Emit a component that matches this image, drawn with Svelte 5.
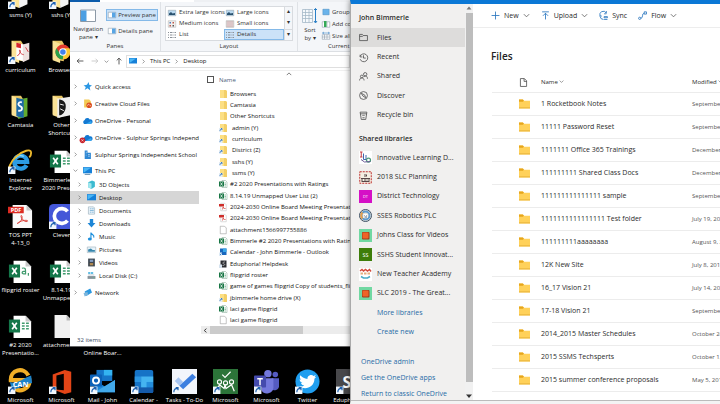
<script>
	// Desktop with two overlapping windows: File Explorer and OneDrive.

	const shortcuts = [
		{ col: 1, row: 1, icon: 'folder', label: 'ssms (Y)', link: true },
		{ col: 2, row: 1, icon: 'folder', label: 'sshs (Y)', link: true },
		{ col: 1, row: 2, icon: 'folderPdf', label: 'curriculum', link: true },
		{ col: 2, row: 2, icon: 'folderChrome', label: 'Browsers' },
		{ col: 1, row: 3, icon: 'folderCam', label: 'Camtasia' },
		{ col: 2, row: 3, icon: 'folderOther', label: 'Other\nShortcuts' },
		{ col: 1, row: 4, icon: 'ie', label: 'Internet\nExplorer', link: true },
		{ col: 2, row: 4, icon: 'excel', label: 'Bimmerle #2\n2020 Presen...' },
		{ col: 1, row: 5, icon: 'pdf', label: 'TOS PPT\n4-13_0' },
		{ col: 2, row: 5, icon: 'clever', label: 'Clever', link: true },
		{ col: 1, row: 6, icon: 'csv', label: 'flipgrid roster' },
		{ col: 2, row: 6, icon: 'excel', label: '8.14.19\nUnmapped ...' },
		{ col: 1, row: 7, icon: 'excel', label: '#2 2020\nPresentatio...' },
		{ col: 2, row: 7, icon: 'page', label: 'attachment...' },
		{ col: 3, row: 7, icon: 'pdf', label: '2024-2030\nOnline Boar...' },
		{ col: 1, row: 8, icon: 'can', label: 'Microsoft', link: true },
		{ col: 2, row: 8, icon: 'office', label: 'Microsoft', link: true },
		{ col: 3, row: 8, icon: 'mail', label: 'Mail - John', link: true },
		{ col: 4, row: 8, icon: 'calendar', label: 'Calendar -', link: true },
		{ col: 5, row: 8, icon: 'todo', label: 'Tasks - To-Do', link: true },
		{ col: 6, row: 8, icon: 'classroom', label: 'Microsoft', link: true },
		{ col: 7, row: 8, icon: 'teams', label: 'Microsoft', link: true },
		{ col: 8, row: 8, icon: 'twitter', label: 'Twitter', link: true },
		{ col: 9, row: 8, icon: 'edu', label: 'Eduphoria!', link: true }
	];

	const roots = [
		{ icon: 'star', label: 'Quick access' },
		{ icon: 'creative', label: 'Creative Cloud Files' },
		{ icon: 'cloud', label: 'OneDrive - Personal' },
		{ icon: 'cloudError', label: 'OneDrive - Sulphur Springs Independent' },
		{ icon: 'building', label: 'Sulphur Springs Independent School' },
		{ icon: 'monitor', label: 'This PC', open: true }
	];

	const places = [
		{ icon: 'cube', label: '3D Objects' },
		{ icon: 'screen', label: 'Desktop', active: true },
		{ icon: 'doc', label: 'Documents' },
		{ icon: 'down', label: 'Downloads' },
		{ icon: 'music', label: 'Music' },
		{ icon: 'picture', label: 'Pictures' },
		{ icon: 'video', label: 'Videos' },
		{ icon: 'disk', label: 'Local Disk (C:)' }
	];

	const files = [
		{ icon: 'dir', label: 'Browsers' },
		{ icon: 'dir', label: 'Camtasia' },
		{ icon: 'dir', label: 'Other Shortcuts' },
		{ icon: 'dirLink', label: 'admin (Y)', pad: true },
		{ icon: 'dirLink', label: 'curriculum', pad: true },
		{ icon: 'dirLink', label: 'District (Z)', pad: true },
		{ icon: 'dirLink', label: 'sshs (Y)', pad: true },
		{ icon: 'dirLink', label: 'ssms (Y)', pad: true },
		{ icon: 'xls', label: '#2 2020 Presentations with Ratings' },
		{ icon: 'xls', label: '8.14.19 Unmapped User List (2)' },
		{ icon: 'pdfSmall', label: '2024-2030 Online Board Meeting Presentation' },
		{ icon: 'pdfSmall', label: '2024-2030 Online Board Meeting Presentation' },
		{ icon: 'blank', label: 'attachment1566997755886' },
		{ icon: 'xls', label: 'Bimmerle #2 2020 Presentations with Ratings' },
		{ icon: 'outlook', label: 'Calendar - John Bimmerle - Outlook' },
		{ icon: 'eduSmall', label: 'Eduphoria! Helpdesk' },
		{ icon: 'xls', label: 'flipgrid roster' },
		{ icon: 'xls', label: 'game of games flipgrid Copy of students_flip' },
		{ icon: 'dirLink', label: 'jbimmerle home drive (X)' },
		{ icon: 'xls', label: 'laci game flipgrid' },
		{ icon: 'blank', label: 'laci game flipgrid' }
	];

	const menu = [
		{ icon: 'navFiles', label: 'Files', active: true },
		{ icon: 'navRecent', label: 'Recent' },
		{ icon: 'navShared', label: 'Shared' },
		{ icon: 'navDiscover', label: 'Discover' },
		{ icon: 'navBin', label: 'Recycle bin' }
	];

	const libraries = [
		{ icon: 'libIld', label: 'Innovative Learning D...' },
		{ icon: 'libSlc', label: '2018 SLC Planning' },
		{ icon: 'libDt', label: 'District Technology' },
		{ icon: 'libRobot', label: 'SSES Robotics PLC' },
		{ icon: 'libOrange', label: 'Johns Class for Videos' },
		{ icon: 'libSs', label: 'SSHS Student Innovat...' },
		{ icon: 'libTeach', label: 'New Teacher Academy' },
		{ icon: 'libOrange', label: 'SLC 2019 - The Great...' }
	];

	const folders = [
		['1 Rocketbook Notes', 'September 4, 2019'],
		['11111 Password Reset', 'September 9, 2019'],
		['1111111 Office 365 Trainings', 'December 4, 2018'],
		['111111111 Shared Class Docs', 'December 11, 2018'],
		['111111111111111 sample', 'September 12, 2019'],
		['1111111111111111 Test folder', 'July 19, 2018'],
		['111111111aaaaaaaa', 'August 9, 2018'],
		['12K New Site', 'July 8, 2015'],
		['16_17 Vision 21', 'July 14, 2016'],
		['17-18 Vision 21', 'September 5, 2017'],
		['2014_2015 Master Schedules', 'October 24, 2014'],
		['2015 SSMS Techsperts', 'October 1, 2015'],
		['2015 summer conference proposals', 'May 5, 2015']
	];
</script>

{#snippet chevron(dir)}
	<svg class="chev" viewBox="0 0 8 8" aria-hidden="true">
		<path d={dir === 'down' ? 'M1 2.5 4 5.5 7 2.5' : 'M2.5 1 5.5 4 2.5 7'} fill="none" stroke="currentColor" />
	</svg>
{/snippet}

{#snippet folderBase()}
	<path d="M4 2h10l2 3v19l-12-2z" fill="#e9c765" />
	<path d="M4 2l8 3v21l-8-3z" fill="#fbe396" />
{/snippet}

{#snippet sheetBase()}
	<path d="M6 2h13l6 6v18H6z" fill="#fff" />
	<path d="M19 2v6h6z" fill="#c9c9c9" />
{/snippet}

{#snippet excelBadge()}
	<path d="M1 6h12v14H1z" fill="#14774a" />
	<path d="M4.500 9.500l5 7m0-7l-5 7" stroke="#fff" stroke-width="1.800" />
{/snippet}

{#snippet desktopIcon(name)}
	{#if name === 'folder'}
		{@render folderBase()}
		<path d="M12 5l9-2v19l-9 4z" fill="#f4f4f4" />
		<path d="M14 8l5-1m-5 4l5-1m-5 4l5-1" stroke="#c0c8d4" />
	{:else if name === 'folderPdf'}
		{@render folderBase()}
		<path d="M9 4l8 2v18l-8-2z" fill="#fff" />
		<path d="M16 6l7-2v18l-7 3z" fill="#eee1df" />
		<path d="M9 4l5 1v5l-5-1z" fill="#d5252d" />
		<path d="M10 18c3-1 4-5 3-6s-1 4 4 5m2-8l3 5" stroke="#d1393f" fill="none" />
	{:else if name === 'folderChrome'}
		{@render folderBase()}
		<circle cx="15" cy="14" r="8" fill="#e33b2e" />
		<path d="M8 10a8 8 0 0 0 7 12l3-6-6 0z" fill="#2ba24c" />
		<path d="M15 22a8 8 0 0 0 7-12h-6z" fill="#fcc934" />
		<circle cx="15" cy="14" r="4" fill="#fff" />
		<circle cx="15" cy="14" r="3" fill="#4182ef" />
	{:else if name === 'folderCam'}
		{@render folderBase()}
		<path d="M11 6l10-2v20l-10 3z" fill="#62ab2f" />
		<path d="M9 4l8 2v20l-8-2z" fill="#1d6aa5" />
		<path d="M15 9c-4-1-5 3-2 4s3 6-2 5" stroke="#fff" stroke-width="2" fill="none" />
	{:else if name === 'folderOther'}
		{@render folderBase()}
		<path d="M9 5l14-2v20l-14 3z" fill="#eee" />
		<path d="M11 6c5 0 8 4 7 9s-4 8-7 8z" fill="#181818" />
		<path d="M12 11l4 1m-4 4l4 2" stroke="#fff" />
	{:else if name === 'ie'}
		<path d="M20 17.500a7 7 0 1 1 .8-3.500H9" stroke="#2c9ce4" stroke-width="4.500" fill="none" />
		<path d="M8 10a7 6 0 0 1 9-2" stroke="#8ddafa" stroke-width="1.500" fill="none" />
		<path d="M3 22C-1 24 2 14 9 8S25-1 25 4c0 2-1 4-2 5" stroke="#edb92d" stroke-width="2" fill="none" />
	{:else if name === 'excel'}
		{@render sheetBase()}
		{@render excelBadge()}
		<path d="M15 10h3m1.500 0h3M15 13h3m1.500 0h3M15 16h3m1.500 0h3" stroke="#3f9a6d" stroke-width="1.500" />
	{:else if name === 'csv'}
		{@render sheetBase()}
		{@render excelBadge()}
		<path d="M15 10c4-1 4 0 4 6-5 1-5-3 0-3m3 2v3" stroke="#3f9a6d" stroke-width="1.300" fill="none" />
	{:else if name === 'page'}
		<path d="M6 1h13l6 6v19H6z" fill="#f1f1f1" />
		<path d="M19 1v6h6z" fill="#bbb" />
	{:else if name === 'pdf'}
		<path d="M5 1h15l6 6v19H5z" fill="#fafafa" />
		<path d="M20 1v6h6z" fill="#c7c7c7" />
		<path d="M0 3h17v7H0z" fill="#dc2b22" />
		<text x="3" y="9" class="glyph pdf-word">PDF</text>
		<path d="M10 21c4-1 6-6 5-8s-2 1 1 4 6 2 5 1-8 0-11 3z" stroke="#da3b35" fill="none" />
	{:else if name === 'clever'}
		<rect width="27" height="27" rx="5" fill="#4457d8" />
		<path d="M20 8a8 8 0 1 0 0 10" stroke="#fff" stroke-width="4" fill="none" />
	{:else if name === 'can'}
		<path d="M22 7A10 10 0 0 0 3 12h20a10 10 0 0 1-17 8" stroke="#f0ae27" stroke-width="4.500" fill="none" />
		<path d="M2 14c8 3 14-4 23-7l1 8c-8 1-13 7-22 7z" fill="#1c82c9" />
		<text x="5" y="19" class="glyph can-word">CAN</text>
	{:else if name === 'office'}
		<path d="M4 6l13-5 7 2v22l-7 2-13-5 12 1V5L8 7v12l-4 2z" fill="#e34517" />
	{:else if name === 'mail'}
		<path d="M7 1h17v12H7z" fill="#1675c8" />
		<path d="M15 1h9v6h-9z" fill="#34b3f1" />
		<path d="M5 12l11 7 11-7v13H5z" fill="#1b86d8" />
		<path d="M5 25l22-13v13z" fill="#42a9ea" />
		<rect y="6" width="13" height="13" rx="1" fill="#0d62b8" />
		<circle cx="6.500" cy="12.500" r="3.300" stroke="#fff" stroke-width="2" fill="none" />
	{:else if name === 'calendar'}
		<rect x="4" y="1" width="20" height="25" rx="2" fill="#1673c6" />
		<path d="M4 8h7v6H4zm7 6h6v6h-6z" fill="#2c96e2" />
		<path d="M11 8h13v6h-7v6h-6v-6z" fill="#45b4f0" />
		<path d="M17 14h7v6h-7z" fill="#238ddc" />
		<path d="M4 20h20v4a2 2 0 0 1-2 2H6a2 2 0 0 1-2-2z" fill="#145aaa" />
	{:else if name === 'todo'}
		<rect width="27" height="27" fill="#f2f5fb" />
		<path d="M3 13l4-4 5 5-4 4z" fill="#a8c6f2" />
		<path d="M8 18L22 5l4 4-14 13z" fill="#3d7fe0" />
	{:else if name === 'classroom'}
		<rect width="27" height="27" fill="#2c7439" />
		<path d="M10 6l3 3 6-6M4 24l3-7 5 4 1-4 1 4 6-4 3 7" stroke="#fff" stroke-width="1.300" fill="none" />
		<g stroke="#fff" stroke-width="1.200" fill="none">
			<circle cx="7" cy="14" r="2.200" />
			<circle cx="13.500" cy="15" r="2.200" />
			<circle cx="20" cy="14" r="2.200" />
		</g>
	{:else if name === 'teams'}
		<circle cx="15" cy="5" r="4" fill="#7378dc" />
		<circle cx="23" cy="6" r="3" fill="#555bc2" />
		<path d="M19 10h8v9a5 5 0 0 1-8 3z" fill="#555bc2" />
		<path d="M8 10h13v10a7 7 0 0 1-13 3z" fill="#7479dd" />
		<rect y="7" width="13" height="13" rx="1" fill="#454bad" />
		<path d="M3.500 10.500h6M6.500 10.500v7" stroke="#fff" stroke-width="1.600" />
	{:else if name === 'twitter'}
		<circle cx="13.500" cy="13.500" r="13" fill="#1f9eef" />
		<path
			d="M5 19c2 0 4 0 5-1.500-2 0-3-1-3.500-2.500h1.500c-2-1-3-2-3-4l1.500.5C5 10 5 8 5.800 6.800 8 9 10 10.500 13.500 10.700 13 7 18 5 20 7.500l2.500-1-1.500 2.300 2-.5-2 2.200C21 20 11 23 5 19z"
			fill="#fff"
		/>
	{:else if name === 'edu'}
		<rect width="27" height="27" fill="#48484b" />
		<text x="7" y="20" class="glyph edu-word">S</text>
	{/if}
{/snippet}

{#snippet smallIcon(name)}
	<svg class="ico" viewBox="0 0 16 16" aria-hidden="true">
		{#if name === 'star'}
			<path d="M10 0l1 5 5 1-4 3 1 6-5-4-5 3 2-5-4-3 6-1z" fill="#2b97e4" />
		{:else if name === 'creative'}
			<path d="M2 1h9l3 3v11H2z" fill="#f3ca54" />
			<circle cx="11" cy="11" r="5" fill="#dc4e1e" />
			<path d="M8 12c0-3 3-3 4-1s2 1 2 0" stroke="#fff" fill="none" />
		{:else if name === 'cloud' || name === 'cloudError'}
			<path d="M2 14a4 4 0 0 1 1-7 5 5 0 0 1 9-1 4 4 0 0 1 2 8z" fill="#1379d2" />
			<path d="M5 14l9-5a3 3 0 0 1 0 5z" fill="#35a7ee" />
			{#if name === 'cloudError'}
				<circle cx="-1" cy="13" r="5" fill="#c9252d" />
				<path d="M-3 11l4 4m0-4l-4 4" stroke="#fff" />
			{/if}
		{:else if name === 'building'}
			<path d="M3 1h5v4h6v11H3z" fill="#2d87d3" />
			<path d="M5 4h2M5 7h1m3 1h3M5 10h1m3 1h3" stroke="#fff" />
		{:else if name === 'monitor' || name === 'screen'}
			<path d="M0 2h16v11H0z" fill="#1680d8" />
			<path d="M1 3h13L1 12z" fill="#4ab6f5" />
			{#if name === 'monitor'}
				<path d="M3 15h10" stroke="#7c9cb5" stroke-width="2" />
			{/if}
		{:else if name === 'cube'}
			<path d="M2 4l7-3 5 2v9l-6 4-6-3z" fill="#3bbad0" />
			<path d="M2 4l6 2v10l-6-3z" fill="#a1e7ee" />
		{:else if name === 'doc'}
			<path d="M2.500 1.500h9l2 2v11h-11z" fill="#eef5fa" stroke="#8ea5b4" />
			<path d="M5 5h3m1 0h3M5 8h7M5 11h3m1 0h3" stroke="#3b8fc5" />
		{:else if name === 'down'}
			<path d="M5 0h6v7h4l-7 8-7-8h4z" fill="#1e86d6" />
		{:else if name === 'music'}
			<path d="M7 12V1c1 4 7 4 5 9" stroke="#1e90dd" stroke-width="2" fill="none" />
			<ellipse cx="5" cy="12.500" rx="3.500" ry="2.800" fill="#1e90dd" />
		{:else if name === 'picture'}
			<path d="M.5 3.500h15v10H.5z" fill="#e8f3fa" stroke="#9aabb6" />
			<path d="M2 12V8l5-2 3 3 4 0v3z" fill="#3787ad" />
		{:else if name === 'video'}
			<path d="M2 1h12v14H2z" fill="#3e4750" />
			<path d="M5 3h6v4H5z" fill="#829bc1" />
			<path d="M5 9h6v4H5z" fill="#b1894f" />
		{:else if name === 'disk'}
			<path d="M1 9h14v5H1z" fill="#86929a" />
			<path d="M2 2h4v3H2zm5 0h4v3H7z" fill="#32a9dc" />
			<path d="M2 7h11" stroke="#c9d2d8" stroke-width="2" />
			<path d="M11 12h2" stroke="#4fe084" />
		{:else if name === 'network'}
			<path d="M3 6l10-5 3 7-10 6z" fill="#2c98df" />
			<path d="M1 9l7-2 1 5-6 3z" fill="#7cb5dc" />
		{:else if name === 'dir' || name === 'dirLink'}
			<path d="M2 0h12l2 2v14H2z" fill="#f3cf68" />
			<path d="M2 0h8v16H2z" fill="#fcdf83" />
			{#if name === 'dirLink'}
				<path d="M0 8h7v8H0z" fill="#e3edf6" />
				<path d="M2 14c0-3 1-4 4-4m-2-1h2v3" stroke="#2a6fb9" stroke-width="1.500" fill="none" />
			{/if}
		{:else if name === 'xls'}
			<path d="M6 1h7l3 3v11H6z" fill="#fff" stroke="#7da38d" />
			<path d="M0 3h10v10H0z" fill="#197645" />
			<path d="M3 5l4 6m0-6l-4 6" stroke="#fff" stroke-width="1.500" />
			<path d="M11 6h3m-3 3h3m-3 3h3" stroke="#2f8757" />
		{:else if name === 'pdfSmall'}
			<path d="M3.500.5h8l3 3v12h-11z" fill="#fff" stroke="#b8b8b8" />
			<path d="M0 2h10v5H0z" fill="#ce2d29" />
			<path d="M6 13c3-2 3-5 2-5s2 4 5 3" stroke="#ce2d29" stroke-width="1.500" fill="none" />
		{:else if name === 'blank'}
			<path d="M2.500.5h8l4 3v12h-12z" fill="#fff" stroke="#888" />
		{:else if name === 'outlook'}
			<path d="M2 1h13v13H2z" fill="#1867bd" />
			<path d="M8 1h7v7H8z" fill="#3aa8ea" />
			<path d="M0 9h6v7H0z" fill="#dceaf6" />
			<path d="M2 14l3-3" stroke="#1867bd" stroke-width="1.500" />
		{:else if name === 'eduSmall'}
			<path d="M3 1h12v14H3z" fill="#2b2d31" />
			<path d="M12 4c-5-1-5 4-2 4s1 4-3 3" stroke="#fff" fill="none" />
			<path d="M0 9h6v7H0z" fill="#d5e2ee" />
		{:else if name === 'paneRight'}
			<path d="M.5 2.500h15v11H.5z" fill="#fff" stroke="#7b8b9b" />
			<path d="M8 3h7v10H8z" fill="#58a5e4" />
		{:else if name === 'viewImg'}
			<path d="M.5 2.500h15v11H.5z" fill="#b9d8ef" stroke="#8b99a5" />
			<path d="M2 12V9l4-3 3 3 5-1v4z" fill="#28506e" />
		{:else if name === 'viewMedium'}
			<path d="M.5 1.500h15v13H.5z" fill="#f2f0ed" stroke="#adadad" />
			<path d="M3 4h3v3H3z" fill="#4a7bc0" />
			<path d="M9 4h3v3H9zM3 10h3v3H3z" fill="#c05a4d" />
			<path d="M9 10h3v3H9z" fill="#555" />
		{:else if name === 'viewSmall'}
			<path d="M.5 1.500h15v13H.5z" fill="#f2e4e2" stroke="#999" />
			<path d="M3 4h2m2 0h2m2 0h2M3 8h2m2 0h2m2 0h2M3 12h2m2 0h2m2 0h2" stroke="#9a6e78" stroke-width="2" />
		{:else if name === 'viewList'}
			<path d="M0 3h2m2 0h4m1 0h2m2 0h3M0 8h2m2 0h4m1 0h2m2 0h3M0 13h2m2 0h4m1 0h2m2 0h3" stroke="#8a9097" stroke-width="2" />
		{:else if name === 'group'}
			<path d="M1.500 2.500h13v11h-13z" fill="#6ab3ea" stroke="#3c83bd" />
			<path d="M1 1v14M15 1v14" stroke="#fff" stroke-dasharray="2 2" />
		{:else if name === 'addCol'}
			<path d="M.5 3.500h15v11H.5zM10 4v10" fill="#fff" stroke="#7b8b9b" />
			<path d="M4 2h5v12H4z" fill="#35a957" />
		{:else if name === 'sizeCol'}
			<path d="M.5 5.500h15v9H.5zM5 5v9m5-9v9M0 10h15" fill="#fff" stroke="#7b8b9b" />
			<path d="M1 2h14M4 0L1 2l3 2m8-4l3 2-3 2" stroke="#2274bd" fill="none" />
		{/if}
	</svg>
{/snippet}

{#snippet lineIcon(name)}
	<svg class="line-ico" viewBox="0 0 16 16" fill="none" stroke="currentColor" aria-hidden="true">
		{#if name === 'navFiles'}
			<path d="M1 13.500v-11h5l2 2h7v9zM1 6h5l2-1.500" />
		{:else if name === 'navRecent'}
			<path d="M2 3v4h4M2 6a7 7 0 1 1 0 5M8 4v5h4" />
		{:else if name === 'navShared'}
			<circle cx="11" cy="4" r="3" />
			<circle cx="5" cy="8" r="2.500" />
			<path d="M1 15c0-6 8-6 8 0M9 8c4-2 6 0 6 4" />
		{:else if name === 'navDiscover'}
			<circle cx="8" cy="8" r="7" />
			<path d="M4 4l6 3 2 5-5-3z" />
		{:else if name === 'navBin'}
			<path d="M2 2h12l-2 13H4zM2 5h12M6 9l2-2 2 2m-4 3h4" />
		{:else if name === 'upload'}
			<path d="M2 1.500h12M8 15V4M3.500 8.500L8 4l4.500 4.500" />
		{:else if name === 'plus'}
			<path d="M8 1v14M1 8h14" />
		{:else if name === 'sync'}
			<path d="M2 9a6 6 0 0 1 11-5V0m0 5H9M1 9h4M2 10a6 6 0 0 0 6 5M9 10h6v2H9zm0 5h6" />
		{:else if name === 'flow'}
			<circle cx="3" cy="13" r="2" />
			<path d="M11 1.500h4v4h-4zM5 13c5 0 1-9 6-9" />
		{:else if name === 'file'}
			<path d="M2.500 1h7l4 4v10h-11zM9 1v5h5" />
		{/if}
	</svg>
{/snippet}

{#snippet libIcon(name)}
	<svg class="lib-ico" viewBox="0 0 26 26" aria-hidden="true">
		{#if name === 'libIld'}
			<rect width="26" height="26" fill="#fff" />
			<path d="M2 2h5M4.500 2v10M2 12h5" stroke="#c33d45" stroke-width="2" />
			<path d="M9 5v12h5M14 8v10" stroke="#4268ae" stroke-width="2" fill="none" />
			<circle cx="19" cy="18" r="4" stroke="#4b9a7b" stroke-width="2.500" fill="none" />
			<path d="M4 17l7 5 12-1" stroke="#6c5b97" stroke-width="2" fill="none" />
		{:else if name === 'libSlc'}
			<rect width="26" height="26" fill="#f5efe3" />
			<rect x="1.500" y="1.500" width="23" height="23" fill="none" stroke="#bc3034" stroke-width="2" stroke-dasharray="4 2" />
			<path d="M12 6v6m3-5v4M4 15h18M4 18h4m2 0h5m2 0h5M5 21h16" stroke="#564646" stroke-width="2" />
		{:else if name === 'libDt'}
			<rect width="26" height="26" fill="#d510c6" />
			<text x="13" y="16" class="glyph lib-word">DT</text>
		{:else if name === 'libSs'}
			<rect width="26" height="26" fill="#3d7d09" />
			<text x="13" y="17" class="glyph lib-word lib-word--big">SS</text>
		{:else if name === 'libRobot'}
			<circle cx="13" cy="13" r="12" fill="#e7e2d6" stroke="#3f5266" stroke-width="2" />
			<circle cx="13" cy="13" r="8" fill="none" stroke="#5c9bd0" stroke-width="4" />
			<path d="M7 7a8 8 0 0 0 0 12" stroke="#e5a04e" stroke-width="4" fill="none" />
			<path d="M9 10h8v8H9z" fill="#fff" />
			<path d="M11 13h1m3 0h1m-5 3h5" stroke="#567" stroke-width="2" />
		{:else if name === 'libOrange'}
			<rect width="26" height="26" fill="#71d8a2" />
			<rect x="6" y="6" width="15" height="15" rx="2" fill="#a53b1a" />
			<rect x="7" y="7" width="12" height="12" rx="2" fill="#ef6428" />
		{:else if name === 'libTeach'}
			<rect width="26" height="26" fill="#fff" />
			<path d="M2 6l4-3 3 3 4-3 4 3 4-3 3 4" stroke="#d34a3b" stroke-width="3" fill="none" />
			<path d="M3 11h20" stroke="#e5ad7e" stroke-width="4" stroke-dasharray="5 2" />
			<path d="M4 17l5 3h8l5-3" stroke="#4aabc6" stroke-width="3" fill="none" />
		{/if}
	</svg>
{/snippet}

<main class="desktop">
	<div class="shortcuts">
		{#each shortcuts as s, i (i)}
			<div class="shortcut" style="grid-area: {s.row} / {s.col}">
				<svg class="shortcut__icon" viewBox="0 0 27 27" aria-hidden="true">
					{@render desktopIcon(s.icon)}
					{#if s.link}
						<path d="M0 19h8v8H0z" fill="#f2f7fc" />
						<path d="M2 25c0-3 1-4 4-4m-2-1h2.500v3" stroke="#1f62b0" stroke-width="1.300" fill="none" />
					{/if}
				</svg>
				<span class="shortcut__label">{s.label}</span>
			</div>
		{/each}
	</div>

	<section class="explorer" aria-label="File Explorer">
		<div class="tabs"><span class="tabs__file"></span><span class="tabs__view"></span></div>

		<div class="ribbon">
			<div class="group group--panes">
				<div class="group__body">
					<button class="tall">
						<svg class="tall__icon" viewBox="0 0 32 26" aria-hidden="true">
							<path d="M1 1h30v23H1z" fill="#fff" stroke="#8c99a6" stroke-width="2" />
							<path d="M2 2h11v21H2z" fill="#4d9fe2" />
						</svg>
						Navigation<br />pane ▾
					</button>
					<div class="panes">
						<button class="cmd cmd--on">{@render smallIcon('paneRight')}Preview pane</button>
						<button class="cmd">{@render smallIcon('paneRight')}Details pane</button>
					</div>
				</div>
				<span class="group__name">Panes</span>
			</div>
			<div class="group group--layout">
				<div class="group__body gallery">
					<button class="view">{@render smallIcon('viewImg')}Extra large icons</button>
					<button class="view">{@render smallIcon('viewImg')}Large icons</button>
					<span class="gallery__arrow">▴</span>
					<button class="view">{@render smallIcon('viewMedium')}Medium icons</button>
					<button class="view">{@render smallIcon('viewSmall')}Small icons</button>
					<span class="gallery__arrow">▾</span>
					<button class="view">{@render smallIcon('viewList')}List</button>
					<button class="view view--on">{@render smallIcon('viewList')}Details</button>
					<span class="gallery__arrow gallery__arrow--more">▾</span>
				</div>
				<span class="group__name">Layout</span>
			</div>
			<div class="group group--current">
				<div class="group__body">
					<button class="tall tall--sort">
						<svg class="tall__icon" viewBox="0 0 32 32" aria-hidden="true">
							<path d="M1 3h20v26H1zM1 9h20M1 15h20M1 21h20M7 3v26M14 3v26" fill="#f5f9fc" stroke="#a0b5c6" stroke-width="1.500" />
							<path d="M27 1v28m-3-3l3 4 3-4M24 4l3-3 3 3" fill="none" stroke="#297fc6" stroke-width="2" />
						</svg>
						Sort<br />by ▾
					</button>
					<div class="columns">
						<button class="cmd">{@render smallIcon('group')}Group by</button>
						<button class="cmd">{@render smallIcon('addCol')}Add columns</button>
						<button class="cmd">{@render smallIcon('sizeCol')}Size all columns</button>
					</div>
				</div>
				<span class="group__name">Current view</span>
			</div>
		</div>

		<div class="address">
			<button class="address__btn" aria-label="Back">
				<svg viewBox="0 0 14 14"><path d="M13 7H2m4-4L2 7l4 4" /></svg>
			</button>
			<button class="address__btn address__btn--off" aria-label="Forward">
				<svg viewBox="0 0 14 14"><path d="M1 7h11M8 3l4 4-4 4" /></svg>
			</button>
			<button class="address__btn address__btn--tiny" aria-label="Recent locations">
				{@render chevron('down')}
			</button>
			<button class="address__btn" aria-label="Up">
				<svg viewBox="0 0 14 14"><path d="M7 13V2M3 6l4-4 4 4" /></svg>
			</button>
			<div class="crumbs">
				{@render smallIcon('screen')}
				{@render chevron('right')}
				<span>This PC</span>
				{@render chevron('right')}
				<span>Desktop</span>
			</div>
		</div>

		<div class="explorer__body">
			<nav class="tree" aria-label="Folders">
				{#each roots as r (r.label)}
					<div class="node" class:node--open={r.open}>
						{@render chevron(r.open ? 'down' : 'right')}
						{@render smallIcon(r.icon)}
						<span>{r.label}</span>
					</div>
				{/each}
				{#each places as p (p.label)}
					<div class="node node--child" class:node--active={p.active}>
						{@render chevron('right')}
						{@render smallIcon(p.icon)}
						<span>{p.label}</span>
					</div>
				{/each}
				<div class="node node--last">
					{@render chevron('right')}
					{@render smallIcon('network')}
					<span>Network</span>
				</div>
			</nav>

			<div class="listing">
				<div class="listing__head">
					<input type="checkbox" aria-label="Select all" />
					<span>Name</span>
					<svg class="listing__sort" viewBox="0 0 8 5" aria-hidden="true">
						<path d="M1 4l3-3 3 3" fill="none" stroke="#555" />
					</svg>
				</div>
				<ul class="files">
					{#each files as f, i (i)}
						<li class="file" class:file--pad={f.pad}>
							{@render smallIcon(f.icon)}
							<span>{f.label}</span>
						</li>
					{/each}
				</ul>
				<div class="hscroll">
					<svg viewBox="0 0 8 8" aria-hidden="true"><path d="M5.500 1L2 4l3.500 3" fill="none" stroke="#333" stroke-width="1.500" /></svg>
					<span class="hscroll__thumb"></span>
				</div>
			</div>
		</div>
		<div class="status">32 items</div>
	</section>

	<section class="onedrive" aria-label="OneDrive">
		<div class="onedrive__body">
			<aside class="side">
				<strong class="side__title">John Bimmerle</strong>
				<nav class="menu">
					{#each menu as m (m.label)}
						<a href="#top" class="menu__item" class:menu__item--active={m.active}>
							{@render lineIcon(m.icon)}{m.label}
						</a>
					{/each}
				</nav>
				<strong class="side__heading">Shared libraries</strong>
				<nav class="libs">
					{#each libraries as l (l.label)}
						<a href="#top" class="libs__item">{@render libIcon(l.icon)}{l.label}</a>
					{/each}
					<a href="#top" class="libs__item libs__item--blue">More libraries</a>
					<a href="#top" class="libs__item libs__item--blue">Create new</a>
				</nav>
				<nav class="foot">
					<a href="#top">OneDrive admin</a>
					<a href="#top">Get the OneDrive apps</a>
					<a href="#top">Return to classic OneDrive</a>
				</nav>
			</aside>
			<div class="vscroll">
				<svg viewBox="0 0 8 8" aria-hidden="true"><path d="M1.500 5.500h5L4 2.500z" fill="#777" /></svg>
				<span class="vscroll__thumb"></span>
				<svg viewBox="0 0 8 8" aria-hidden="true"><path d="M1 2.500h6L4 6z" fill="#333" /></svg>
			</div>
			<div class="content">
				<div class="bar">
					<button class="bar__btn">{@render lineIcon('plus')}New{@render chevron('down')}</button>
					<button class="bar__btn">{@render lineIcon('upload')}Upload{@render chevron('down')}</button>
					<button class="bar__btn">{@render lineIcon('sync')}Sync</button>
					<button class="bar__btn">{@render lineIcon('flow')}Flow{@render chevron('down')}</button>
				</div>
				<h1>Files</h1>
				<table>
					<thead>
						<tr>
							<th class="c-icon">{@render lineIcon('file')}</th>
							<th>Name {@render chevron('down')}</th>
							<th class="c-date">Modified {@render chevron('down')}</th>
						</tr>
					</thead>
					<tbody>
						{#each folders as [name, date] (name)}
							<tr>
								<td class="c-icon">
									<svg class="folder" viewBox="0 0 20 18" aria-hidden="true">
										<path d="M0 1h7l2 2h11v14H0z" fill="#ffd15a" />
										<path d="M0 1h7l2 2-2 2H0z" fill="#e6a51c" />
										<path d="M0 15h20v2H0z" fill="#eab63e" />
									</svg>
								</td>
								<td>{name}</td>
								<td class="c-date">{date}</td>
							</tr>
						{/each}
					</tbody>
				</table>
			</div>
		</div>
	</section>
</main>

<style>
	:global(body) {
		margin: 0;
		background: #000;
	}

	.desktop {
		position: relative;
		height: 100vh;
		overflow: hidden;
		background: #000;
		font-family: 'Open Sans', 'Noto Sans', sans-serif;
		font-size: 6px;
		line-height: 8px;
		color: #111;
	}

	button {
		margin: 0;
		padding: 0;
		border: 0;
		background: none;
		font: inherit;
		color: inherit;
	}

	a {
		color: inherit;
		text-decoration: none;
	}

	svg {
		display: block;
		flex: none;
		overflow: visible;
	}

	.ico {
		width: 8px;
		height: 8px;
	}

	.chev {
		width: 5px;
		height: 5px;
		color: #666;
	}

	/* ---- Desktop shortcuts ---- */
	.shortcuts {
		display: grid;
		grid-template-columns: repeat(9, 41px);
		grid-template-rows: repeat(8, 55px);
		margin-top: -16px;
	}

	.shortcut {
		display: flex;
		flex-direction: column;
		align-items: center;
		gap: 2px;
		color: #fff;
		text-align: center;
	}

	.shortcut__icon {
		width: 25px;
		height: 25px;
	}

	.shortcut__label {
		white-space: pre;
	}

	.glyph {
		font-family: 'Open Sans', sans-serif;
		font-weight: 700;
		fill: #fff;
	}

	.pdf-word {
		font-size: 6px;
	}

	.can-word {
		font-size: 8px;
	}

	.edu-word {
		font-size: 17px;
	}

	.lib-word {
		font-size: 8px;
		font-weight: 400;
		text-anchor: middle;
	}

	.lib-word--big {
		font-size: 11px;
	}

	/* ---- File Explorer ---- */
	.explorer {
		position: absolute;
		top: 0;
		left: 70px;
		display: flex;
		flex-direction: column;
		width: 280px;
		height: 346px;
		overflow: hidden;
		border-bottom: 1px solid #666;
		background: #fff;
	}

	.tabs {
		display: flex;
		height: 2px;
		background: #eef0f3;
	}

	.tabs__file {
		width: 30px;
		background: #0c5cac;
	}

	.tabs__view {
		width: 94px;
		background: #fff;
	}

	.ribbon {
		display: flex;
		height: 49px;
		border-bottom: 1px solid #dcdfe3;
		background: #f4f6f9;
		color: #333;
	}

	.group {
		display: flex;
		flex: none;
		flex-direction: column;
		align-items: center;
		justify-content: space-between;
		padding: 4px 3px 0;
		border-right: 1px solid #dfe2e6;
	}

	.group--panes {
		width: 84px;
	}

	.group--layout {
		width: 130px;
	}

	.group--current {
		align-items: flex-start;
		width: 110px;
	}

	.group--current .group__name {
		padding-left: 27px;
	}

	.group__body {
		display: flex;
		gap: 2px;
		white-space: nowrap;
	}

	.group__name {
		padding-bottom: 1px;
	}

	.tall {
		width: 32px;
		padding-top: 3px;
	}

	.tall--sort {
		width: 18px;
		padding-top: 1px;
	}

	.tall__icon {
		width: 16px;
		height: 14px;
		margin: 0 auto 2px;
	}

	.tall--sort .tall__icon {
		height: 16px;
	}

	.panes {
		display: flex;
		flex-direction: column;
		gap: 4px;
		padding-top: 3px;
	}

	.cmd {
		display: flex;
		align-items: center;
		gap: 2px;
		padding: 1px;
		border: 1px solid transparent;
	}

	.cmd--on {
		border-color: #84b9e8;
		background: #cbe2f8;
	}

	.columns .cmd {
		padding: 1px 0;
	}

	.gallery {
		display: grid;
		grid-template-columns: 58px 60px 8px;
		gap: 0;
		border: 1px solid #d8dbdf;
		background: #fff;
	}

	.view {
		display: flex;
		align-items: center;
		gap: 3px;
		padding: 0 1px;
		border: 1px solid transparent;
		line-height: 9px;
	}

	.view--on {
		border-color: #84b9e8;
		background: #cbe2f8;
	}

	.gallery__arrow {
		border-left: 1px solid #d8dbdf;
		background: #f4f6f9;
		text-align: center;
	}

	.gallery__arrow--more {
		border-top: 1px solid #d8dbdf;
	}

	.address {
		display: flex;
		align-items: center;
		height: 18px;
		padding-left: 2px;
		border-bottom: 1px solid #f0f0f0;
	}

	.address__btn {
		display: flex;
		justify-content: center;
		width: 15px;
	}

	.address__btn > svg:not(.chev) {
		width: 8px;
		height: 8px;
		fill: none;
		stroke: #444;
		stroke-width: 1.500;
	}

	.address__btn--off {
		opacity: 0.3;
	}

	.address__btn--tiny {
		width: 9px;
	}

	.crumbs {
		display: flex;
		flex: 1;
		align-items: center;
		gap: 4px;
		height: 11px;
		padding-left: 2px;
		border: 1px solid #dfdfdf;
	}

	.explorer__body {
		display: flex;
		flex: 1;
		min-height: 0;
	}

	.tree {
		flex: none;
		width: 129px;
		padding-top: 7px;
		overflow: hidden;
	}

	.node {
		display: flex;
		align-items: center;
		gap: 3px;
		height: 17px;
		padding-left: 3px;
		white-space: nowrap;
	}

	.node .ico {
		width: 9px;
		height: 9px;
		margin-left: 2px;
	}

	.node--open {
		height: 15px;
	}

	.node--child {
		height: 13px;
		padding-left: 7px;
	}

	.node--active {
		background: #d6d6d6;
	}

	.node--last {
		height: 21px;
	}

	.listing {
		display: flex;
		flex: 1;
		flex-direction: column;
		min-width: 0;
		padding-left: 2px;
	}

	.listing__head {
		display: grid;
		grid-template-columns: 8px 63px 8px;
		align-items: center;
		gap: 4px;
		height: 17px;
		padding-left: 6px;
		color: #4c607a;
	}

	.listing__head input {
		appearance: none;
		width: 7px;
		height: 7px;
		margin: 0;
		border: 1px solid #555;
		background: #fff;
	}

	.listing__sort {
		align-self: start;
		width: 6px;
		height: 4px;
		margin-top: 1px;
	}

	.files {
		display: grid;
		flex: 1;
		grid-auto-rows: 1fr;
		margin: 0;
		padding: 0 0 0 18px;
		list-style: none;
	}

	.file {
		display: flex;
		align-items: center;
		gap: 3px;
		overflow: hidden;
		white-space: nowrap;
	}

	.file--pad {
		gap: 5px;
	}

	.hscroll {
		display: flex;
		align-items: center;
		height: 8px;
		background: #ececec;
	}

	.hscroll svg {
		width: 5px;
		height: 5px;
		margin: 0 2px;
	}

	.hscroll__thumb {
		width: 93px;
		height: 8px;
		background: #cbcbcb;
	}

	.status {
		height: 12px;
		padding-left: 7px;
		color: #35475c;
		line-height: 12px;
	}

	/* ---- OneDrive ---- */
	.onedrive {
		position: absolute;
		top: 0;
		right: 0;
		bottom: 0;
		left: 350px;
		display: flex;
		flex-direction: column;
		border-top: 4px solid #0b78d6;
		border-bottom: 3px solid #f3f3f3;
		border-left: 1px solid #aaa;
		box-shadow: 0 0 6px rgba(0, 0, 0, 0.5);
		background: #fff;
		font-size: 7px;
		line-height: 10px;
		color: #2b2b2b;
	}

	.onedrive__body {
		display: flex;
		flex: 1;
		min-height: 0;
		border-bottom: 1px solid #bbb;
	}

	.side {
		display: flex;
		flex: none;
		flex-direction: column;
		width: 114px;
		overflow: hidden;
		background: #f1f0ef;
		white-space: nowrap;
	}

	.side__title,
	.side__heading {
		padding: 9px 8px 5px;
		font-weight: 600;
	}

	.side__heading {
		padding: 9px 8px 4px;
	}

	.menu,
	.libs {
		display: grid;
		flex: none;
		grid-auto-rows: 1fr;
		height: 97px;
	}

	.libs {
		height: 194px;
	}

	.menu__item,
	.libs__item {
		display: flex;
		align-items: center;
		gap: 9px;
		padding-left: 8px;
	}

	.menu__item--active {
		background: #dddcdb;
	}

	.libs__item {
		gap: 5px;
	}

	.libs__item--blue {
		padding-left: 26px;
		color: #266ba6;
	}

	.line-ico {
		width: 9px;
		height: 9px;
		color: #555;
		stroke-width: 1.500;
	}

	.lib-ico {
		width: 13px;
		height: 13px;
	}

	.foot {
		display: flex;
		flex: none;
		flex-direction: column;
		gap: 6px;
		padding: 15px 0 0 10px;
		color: #266ba6;
	}

	.vscroll {
		display: flex;
		flex: none;
		flex-direction: column;
		align-items: center;
		width: 8px;
		background: #f1f1f1;
	}

	.vscroll svg {
		width: 8px;
		height: 8px;
	}

	.vscroll__thumb {
		flex: 1;
		width: 7px;
		margin: 1px 0 10px;
		background: #bdbdbd;
	}

	.content {
		flex: 1;
		min-width: 0;
		overflow: hidden;
	}

	.bar {
		display: flex;
		gap: 11px;
		height: 23px;
		padding-left: 18px;
		border-bottom: 1px solid #ededed;
	}

	.bar__btn {
		display: flex;
		align-items: center;
		gap: 4px;
	}

	.bar__btn .line-ico {
		color: #2b77bf;
	}

	.bar__btn .chev {
		width: 7px;
		height: 7px;
	}

	h1 {
		margin: 0;
		padding: 20px 18px 12px;
		font-size: 10px;
		font-weight: 600;
		line-height: 16px;
		color: #222;
	}

	table {
		width: 229px;
		min-width: calc(100% - 19px);
		margin-left: 19px;
		border-collapse: collapse;
		table-layout: fixed;
	}

	th,
	td {
		height: 22px;
		padding: 0;
		border-bottom: 1px solid #ececec;
		font-weight: 400;
		text-align: left;
		white-space: nowrap;
	}

	th {
		height: 12px;
		padding-bottom: 4px;
		font-size: 6px;
	}

	th .chev {
		display: inline-block;
	}

	.c-icon {
		width: 49px;
	}

	.c-icon svg {
		margin-left: 27px;
	}

	.c-date {
		width: 29px;
		font-size: 6px;
		color: #555;
	}

	th.c-date {
		color: #2b2b2b;
	}

	.folder {
		width: 11px;
		height: 10px;
	}
</style>
